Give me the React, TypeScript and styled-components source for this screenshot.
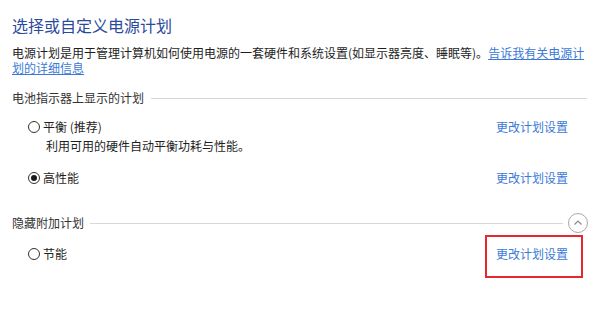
import React from "react";
import styled, { createGlobalStyle } from "styled-components";

const Global = createGlobalStyle`
  html, body { margin: 0; padding: 0; background: #ffffff; }
  body { font-family: "Noto Sans CJK SC", "Noto Sans", sans-serif; }
`;

const Page = styled.div`
  width: 600px;
  height: 320px;
  box-sizing: border-box;
  padding: 15px 12px 0 12px;
  background: #fff;
  color: #1e1e1e;
  font-family: "Noto Sans CJK SC", "Noto Sans", sans-serif;
`;

const Title = styled.h1`
  margin: 0;
  font-size: 16px;
  line-height: 20px;
  font-weight: 400;
  color: #2a4a9c;
`;

const Intro = styled.p`
  margin: 10px 0 0 0;
  font-size: 12px;
  line-height: 15px;
  color: #1e1e1e;
`;

const Link = styled.a<{ $underline?: boolean }>`
  color: #3a7ad6;
  text-decoration: ${(p) => (p.$underline ? "underline" : "none")};
  cursor: pointer;
  font-size: 12px;
`;

const Section = styled.div<{ $top: number }>`
  margin-top: ${(p) => p.$top}px;
`;

const SectionHeader = styled.div<{ $rightPad: number }>`
  display: flex;
  align-items: center;
  height: 16px;
  padding-right: ${(p) => p.$rightPad}px;
  font-size: 12px;
  line-height: 16px;
  color: #333;
`;

const Rule = styled.div<{ $gap: number }>`
  flex: 1;
  height: 1px;
  background: #d8d8d8;
  margin-left: ${(p) => p.$gap}px;
`;

const CollapseButton = styled.button`
  width: 20px;
  height: 20px;
  margin: -2px 0 -2px 5px;
  padding: 0;
  border: 1px solid #a8a8a8;
  border-radius: 50%;
  background: #fff;
  display: flex;
  align-items: center;
  justify-content: center;
  box-sizing: border-box;
  flex-shrink: 0;
`;

const PlanRow = styled.div<{ $top: number }>`
  display: flex;
  justify-content: space-between;
  align-items: center;
  margin-top: ${(p) => p.$top}px;
  padding: 0 20px 0 16px;
  font-size: 12px;
  line-height: 16px;
`;

const RadioLabel = styled.label`
  display: flex;
  align-items: center;
  gap: 3px;
  color: #1e1e1e;
`;

const RadioCircle = styled.span<{ $checked?: boolean }>`
  width: 12px;
  height: 12px;
  box-sizing: border-box;
  border: 1px solid #333;
  border-radius: 50%;
  display: flex;
  align-items: center;
  justify-content: center;
  &::after {
    content: "";
    display: ${(p) => (p.$checked ? "block" : "none")};
    width: 6px;
    height: 6px;
    border-radius: 50%;
    background: #1a1a1a;
  }
`;

const PlanDesc = styled.div`
  margin-top: 3px;
  padding-left: 34px;
  font-size: 12px;
  line-height: 16px;
  color: #1e1e1e;
`;

const Highlight = styled.span`
  position: relative;
  display: inline-block;
  &::before {
    content: "";
    position: absolute;
    left: -11px;
    right: -15px;
    top: -11px;
    bottom: -16px;
    border: 2px solid #e8262e;
  }
`;

const Chevron = () => (
  <svg width="10" height="10" viewBox="0 0 10 10">
    <path d="M1.5 6.5 L5 3 L8.5 6.5" fill="none" stroke="#8a8a8a" strokeWidth="1.2" />
  </svg>
);

type PlanProps = { name: string; checked?: boolean; top: number; boxed?: boolean };

const Plan = ({ name, checked, top, boxed }: PlanProps) => (
  <PlanRow $top={top}>
    <RadioLabel>
      <RadioCircle $checked={checked} />
      {name}
    </RadioLabel>
    {boxed ? (
      <Highlight>
        <Link>更改计划设置</Link>
      </Highlight>
    ) : (
      <Link>更改计划设置</Link>
    )}
  </PlanRow>
);

export default function App() {
  return (
    <>
      <Global />
      <Page>
        <Title>选择或自定义电源计划</Title>
        <Intro>
          电源计划是用于管理计算机如何使用电源的一套硬件和系统设置(如显示器亮度、睡眠等)。
          <Link $underline>告诉我有关电源计划的详细信息</Link>
        </Intro>
        <Section $top={15}>
          <SectionHeader $rightPad={1}>
            电池指示器上显示的计划
            <Rule $gap={7} />
          </SectionHeader>
          <Plan name="平衡 (推荐)" top={13} />
          <PlanDesc>利用可用的硬件自动平衡功耗与性能。</PlanDesc>
          <Plan name="高性能" checked top={16} />
        </Section>
        <Section $top={29}>
          <SectionHeader $rightPad={-4}>
            隐藏附加计划
            <Rule $gap={6} />
            <CollapseButton>
              <Chevron />
            </CollapseButton>
          </SectionHeader>
          <Plan name="节能" top={15} boxed />
        </Section>
      </Page>
    </>
  );
}
